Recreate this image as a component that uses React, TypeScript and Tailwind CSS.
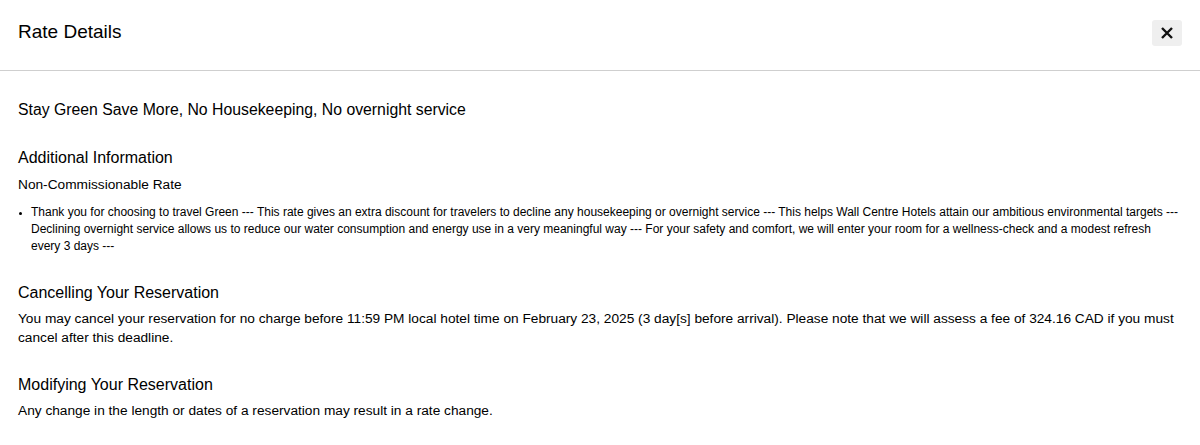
import React from "react";

export default function App() {
  return (
    <div className="w-[1200px] h-[445px] bg-white text-black overflow-hidden" style={{ fontFamily: '"Liberation Sans", Arial, sans-serif' }}>
      <div className="flex items-start justify-between h-[71px] px-[18px] pt-[20px] border-b border-[#cfcfcf]">
        <h1 className="text-[19px] leading-[24px]">Rate Details</h1>
        <button className="w-[30px] h-[26px] rounded-[3px] bg-[#efefef] flex items-center justify-center">
          <svg width="14" height="14" viewBox="0 0 14 14" fill="none" stroke="#111" strokeWidth="2.4" strokeLinecap="butt">
            <path d="M2 2L12 12M12 2L2 12" />
          </svg>
        </button>
      </div>
      <div className="px-[18px] pt-[29px]">
        <h2 className="text-[15.8px] leading-[20px]">Stay Green Save More, No Housekeeping, No overnight service</h2>
        <h3 className="text-[16px] leading-[20px] mt-[28px]">Additional Information</h3>
        <p className="text-[13.7px] leading-[18px] mt-[8px]">Non-Commissionable Rate</p>
        <ul className="mt-[10px] pl-[13px] list-disc text-[12px] leading-[17px]">
          <li className="marker:text-[9px]">
            Thank you for choosing to travel Green --- This rate gives an extra discount for travelers to decline any housekeeping or overnight service --- This helps Wall Centre Hotels attain our ambitious environmental targets --- Declining overnight service allows us to reduce our water consumption and energy use in a very meaningful way --- For your safety and comfort, we will enter your room for a wellness-check and a modest refresh every 3 days ---
          </li>
        </ul>
        <h3 className="text-[16px] leading-[20px] mt-[28px]">Cancelling Your Reservation</h3>
        <p className="text-[13.7px] leading-[19px] mt-[6px]">
          You may cancel your reservation for no charge before 11:59 PM local hotel time on February 23, 2025 (3 day[s] before arrival). Please note that we will assess a fee of 324.16 CAD if you must cancel after this deadline.
        </p>
        <h3 className="text-[16px] leading-[20px] mt-[28px]">Modifying Your Reservation</h3>
        <p className="text-[13.7px] leading-[19px] mt-[6px]">Any change in the length or dates of a reservation may result in a rate change.</p>
      </div>
    </div>
  );
}
